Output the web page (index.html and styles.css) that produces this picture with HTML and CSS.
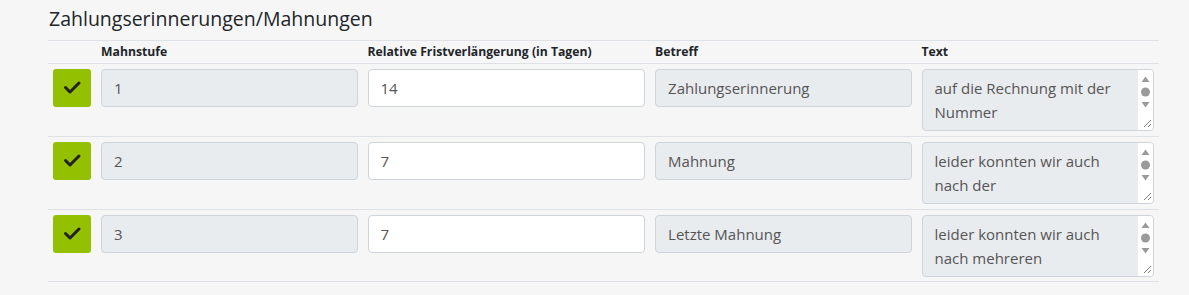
FILE: index.html
```html
<!DOCTYPE html>
<html lang="de">
<head>
  <meta charset="UTF-8" />
  <meta name="viewport" content="width=device-width, initial-scale=1.0"/>
  <title>Zahlungserinnerungen/Mahnungen</title>
  <link rel="stylesheet" href="styles.css">
</head>
<body>
  <div class="panel">
    <h2>Zahlungserinnerungen/Mahnungen</h2>
    <table class="dunning">
      <thead>
        <tr>
          <th class="col-check"></th>
          <th class="col-level">Mahnstufe</th>
          <th class="col-days">Relative Fristverlängerung (in Tagen)</th>
          <th class="col-subject">Betreff</th>
          <th class="col-text">Text</th>
        </tr>
      </thead>
      <tbody>
        <tr>
          <td><button class="check"><svg viewBox="0 0 38 38" width="38" height="38"><polyline points="12.5,18.5 17,23 26,14" /></svg></button></td>
          <td><input type="text" value="1" readonly></td>
          <td><input type="text" value="14"></td>
          <td><input type="text" value="Zahlungserinnerung" readonly></td>
          <td>
            <div class="textbox">
              <textarea readonly>auf die Rechnung mit der Nummer {Rechnungsnummer} ist bis heute noch kein Zahlungseingang zu verzeichnen.</textarea>
              <div class="fake-scroll">
                <svg viewBox="0 0 15 60" width="15" height="60">
                  <polygon points="3.5,12 11.5,12 7.5,6.5" />
                  <circle cx="7.5" cy="22" r="4.5" />
                  <polygon points="3.5,32 11.5,32 7.5,37.5" />
                  <line class="grip" x1="13" y1="50" x2="6" y2="57" />
                  <line class="grip" x1="13" y1="54" x2="10" y2="57" />
                </svg>
              </div>
            </div>
          </td>
        </tr>
        <tr>
          <td><button class="check"><svg viewBox="0 0 38 38" width="38" height="38"><polyline points="12.5,18.5 17,23 26,14" /></svg></button></td>
          <td><input type="text" value="2" readonly></td>
          <td><input type="text" value="7"></td>
          <td><input type="text" value="Mahnung" readonly></td>
          <td>
            <div class="textbox">
              <textarea readonly>leider konnten wir auch nach der Zahlungserinnerung noch keinen Zahlungseingang feststellen.</textarea>
              <div class="fake-scroll">
                <svg viewBox="0 0 15 60" width="15" height="60">
                  <polygon points="3.5,12 11.5,12 7.5,6.5" />
                  <circle cx="7.5" cy="22" r="4.5" />
                  <polygon points="3.5,32 11.5,32 7.5,37.5" />
                  <line class="grip" x1="13" y1="50" x2="6" y2="57" />
                  <line class="grip" x1="13" y1="54" x2="10" y2="57" />
                </svg>
              </div>
            </div>
          </td>
        </tr>
        <tr>
          <td><button class="check"><svg viewBox="0 0 38 38" width="38" height="38"><polyline points="12.5,18.5 17,23 26,14" /></svg></button></td>
          <td><input type="text" value="3" readonly></td>
          <td><input type="text" value="7"></td>
          <td><input type="text" value="Letzte Mahnung" readonly></td>
          <td>
            <div class="textbox">
              <textarea readonly>leider konnten wir auch nach mehreren Zahlungserinnerungen keinen Zahlungseingang feststellen.</textarea>
              <div class="fake-scroll">
                <svg viewBox="0 0 15 60" width="15" height="60">
                  <polygon points="3.5,12 11.5,12 7.5,6.5" />
                  <circle cx="7.5" cy="22" r="4.5" />
                  <polygon points="3.5,32 11.5,32 7.5,37.5" />
                  <line class="grip" x1="13" y1="50" x2="6" y2="57" />
                  <line class="grip" x1="13" y1="54" x2="10" y2="57" />
                </svg>
              </div>
            </div>
          </td>
        </tr>
      </tbody>
    </table>
  </div>
</body>
</html>
```

FILE: styles.css
```css
body {
  font-family: "Open Sans", "Noto Sans", sans-serif;
  background-color: #f6f6f6;
  color: #212529;
  margin: 0;
  padding: 0;
}
.panel {
  width: 1111px;
  margin-left: 48px;
}
h2 {
  margin: 0;
  padding-top: 7px;
  padding-left: 1px;
  font-size: 19.5px;
  font-weight: 500;
  line-height: 24px;
  height: 33px;
}
.dunning {
  width: 1111px;
  border-collapse: collapse;
  table-layout: fixed;
}
.dunning th {
  font-size: 12.2px;
  font-weight: 700;
  text-align: left;
  line-height: 14px;
  padding: 4px 5px;
  border-top: 1px solid #dee2e6;
  border-bottom: 1px solid #dee2e6;
}
.dunning td {
  padding: 5px;
  vertical-align: top;
  border-bottom: 1px solid #dee2e6;
}
.dunning tbody tr:last-child td {
  padding-bottom: 4px;
}
.col-check { width: 38px; }
.col-level { width: 256px; }
.col-days { width: 277px; }
.col-subject { width: 256px; }
.col-text { width: 232px; }
.check {
  display: block;
  width: 38px;
  height: 38px;
  padding: 0;
  border: none;
  border-radius: 3px;
  background: #93c000;
  cursor: pointer;
}
.check svg {
  display: block;
}
.check polyline {
  fill: none;
  stroke: #222;
  stroke-width: 3;
  stroke-linecap: round;
  stroke-linejoin: round;
}
input[type="text"], textarea {
  display: block;
  box-sizing: border-box;
  width: 100%;
  margin: 0;
  font-family: "Open Sans", "Noto Sans", sans-serif;
  font-size: 15px;
  color: #555;
  background: #fff;
  border: 1px solid #ced4da;
  border-radius: 4px;
  outline: none;
}
input[type="text"] {
  height: 38px;
  padding: 6px 12px;
}
input[readonly], textarea[readonly] {
  background: #e9ecef;
}
.textbox {
  position: relative;
}
textarea {
  height: 62px;
  padding: 6px 27px 6px 12px;
  line-height: 24px;
  overflow: hidden;
  resize: none;
}
.fake-scroll {
  position: absolute;
  top: 1px;
  right: 1px;
  bottom: 1px;
  width: 15px;
  background: #fff;
  border-top-right-radius: 3px;
  border-bottom-right-radius: 3px;
}
.fake-scroll svg {
  display: block;
}
.fake-scroll polygon, .fake-scroll circle {
  fill: #9a9a9a;
}
.fake-scroll .grip {
  stroke: #808080;
  stroke-width: 1;
}
```
